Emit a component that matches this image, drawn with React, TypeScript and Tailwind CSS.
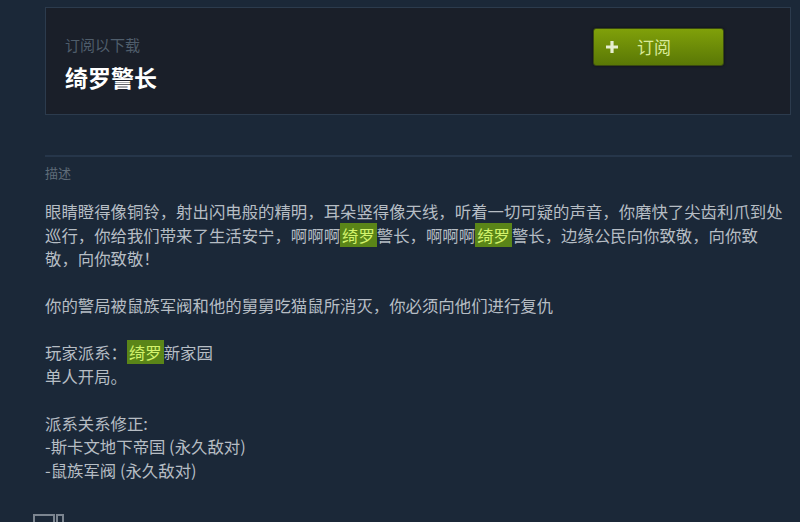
import React from "react";

const Hl = ({ children }: { children: React.ReactNode }) => (
    <span className="bg-[#5a8518] px-[2px] text-[#d4f36c]">{children}</span>
);

export default function App() {
    return (
        <div
            className="w-[800px] h-[522px] overflow-hidden bg-[#1b2838] pl-[45px] pt-[7px]"
            style={{ fontFamily: '"Noto Sans CJK SC", "Noto Sans", sans-serif' }}
        >
            {/* subscribe box */}
            <div className="flex justify-between w-[746px] h-[108px] border border-[#2c3b4d] bg-[#1a1f29] pl-[19px]">
                <div className="pt-[27px]">
                    <div className="text-[15px] leading-[19px] text-[#4f5d6b]">订阅以下载</div>
                    <div className="mt-[8px] text-[23px] leading-[30px] font-bold text-white">绮罗警长</div>
                </div>
                <button className="mt-[20px] mr-[66px] flex items-center w-[131px] h-[38px] rounded-[3px] border border-[#3a4a10] bg-gradient-to-b from-[#80a00a] to-[#5a7806] pl-[10px] shadow-[0_0_3px_rgba(0,0,0,0.5)]">
                    <svg width="16" height="16" viewBox="0 0 16 16">
                        <path d="M8 2v12M2 8h12" stroke="#e6eed0" strokeWidth="3.2" />
                    </svg>
                    <span className="ml-[17px] text-[17px] text-[#d9ea9a]">订阅</span>
                </button>
            </div>

            {/* divider */}
            <div className="mt-[40px] h-[2px] w-[747px] bg-[#26364a]" />

            <div className="mt-[8px] text-[13px] leading-[16px] text-[#5f6c79]">描述</div>

            {/* description */}
            <div className="mt-[19px] w-[744px] text-[16.4px] leading-[23.5px] text-[#b6bdc4]">
                眼睛瞪得像铜铃，射出闪电般的精明，耳朵竖得像天线，听着一切可疑的声音，你磨快了尖齿利爪到处巡行，你给我们带来了生活安宁，啊啊啊<Hl>绮罗</Hl>警长，啊啊啊<Hl>绮罗</Hl>警长，边缘公民向你致敬，向你致敬，向你致敬！
                <br />
                <br />
                你的警局被鼠族军阀和他的舅舅吃猫鼠所消灭，你必须向他们进行复仇
                <br />
                <br />
                玩家派系：<Hl>绮罗</Hl>新家园
                <br />
                单人开局。
                <br />
                <br />
                派系关系修正:
                <br />
                -斯卡文地下帝国 (永久敌对)
                <br />
                -鼠族军阀 (永久敌对)
            </div>

            {/* partly visible icon at the bottom */}
            <div className="mt-[32px] -ml-[12px] flex gap-[1px]">
                <div className="w-[22px] h-[14px] border-2 border-[#7c8590]" />
                <div className="w-[8px] h-[14px] border-2 border-[#7c8590]" />
            </div>
        </div>
    );
}
